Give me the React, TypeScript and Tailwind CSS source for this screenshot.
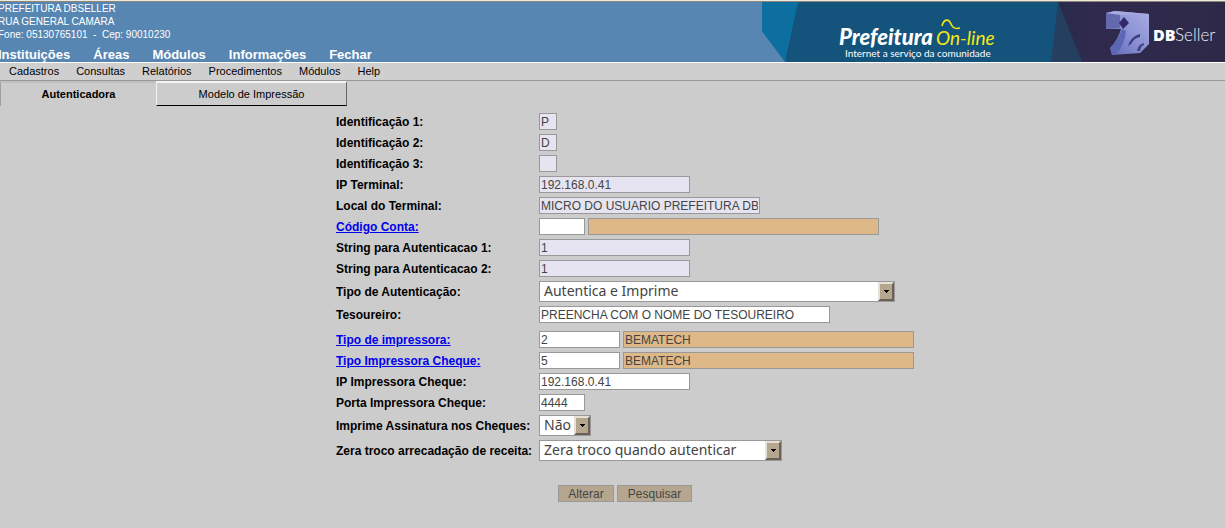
import { useState } from "react";
import type { ReactNode } from "react";

const fieldBase =
  "box-border h-[17px] border border-[#999999] px-px text-xs leading-[15px] text-[#444444] outline-none rounded-none";

type Tone = "edit" | "locked" | "lookup";

const tones: Record<Tone, string> = {
  edit: "bg-white",
  locked: "bg-[#e6e4f1]",
  lookup: "bg-[#deb887]",
};

function Field({ id, value, tone = "edit", width, label }: {
  id: string; value: string; tone?: Tone; width: string; label?: string;
}) {
  return (
    <input
      id={id}
      type="text"
      aria-label={label}
      defaultValue={value}
      readOnly={tone !== "edit"}
      className={`${fieldBase} ${tones[tone]} ${width}`}
    />
  );
}

function Choice({ id, options, width }: { id: string; options: string[]; width: string }) {
  return (
    <div className={`grid h-[21px] border border-[#999999] bg-white ${width}`}>
      <select
        id={id}
        className="col-start-1 row-start-1 h-[19px] w-full appearance-none bg-transparent pb-0.5 pl-1 font-['Noto_Sans',sans-serif] text-sm leading-[17px] text-[#444444] outline-none"
      >
        {options.map((o) => (
          <option key={o}>{o}</option>
        ))}
      </select>
      <span className="pointer-events-none col-start-1 row-start-1 flex h-[19px] w-4 items-center justify-center justify-self-end border-2 border-t-[#e6e0d6] border-r-[#6b6152] border-b-[#6b6152] border-l-[#e6e0d6] bg-[#b5a78f]">
        <svg width="5" height="3" viewBox="0 0 5 3" shapeRendering="crispEdges" aria-hidden="true">
          <path d="M0 0h5v1h-1v1h-1v1h-1v-1h-1v-1h-1z" fill="#000" />
        </svg>
      </span>
    </div>
  );
}

function Row({ id, label, link = false, children, className = "" }: {
  id: string; label: string; link?: boolean; children: ReactNode; className?: string;
}) {
  return (
    <div className={`grid grid-cols-[200px_auto] items-center gap-x-[3px] ${className}`}>
      <label htmlFor={id} className="pt-px text-xs leading-4 font-bold whitespace-nowrap">
        {link ? <a href="#" className="text-[#0000ee] underline">{label}</a> : label}
      </label>
      <div className="flex items-center gap-[3px]">{children}</div>
    </div>
  );
}

function Banner() {
  return (
    <svg className="h-[60px] w-[463px] shrink-0" viewBox="0 0 463 60" role="img" aria-label="Prefeitura On-line DBSeller">
      <defs>
        <linearGradient id="navy" x1="0" x2="1" y1="0" y2="0">
          <stop offset="0" stopColor="#292b4b" />
          <stop offset="0.2" stopColor="#302a4e" />
          <stop offset="1" stopColor="#2d2947" />
        </linearGradient>
        <linearGradient id="cube" x1="0" x2="1" y1="1" y2="0">
          <stop offset="0" stopColor="#5a66b4" />
          <stop offset="0.5" stopColor="#8a90d3" />
          <stop offset="1" stopColor="#a9ade4" />
        </linearGradient>
      </defs>
      <path d="M0 0H463V60H24L0 29Z" fill="#14537b" />
      <path d="M0 0H36L23 60L0 29Z" fill="#0c6f9f" />
      <path d="M296 0L320 60H289Z" fill="#253f60" />
      <path d="M296 0H463V60H320Z" fill="url(#navy)" />
      <text x="77" y="43" fill="#fff" fontFamily="Lato, sans-serif" fontSize="22" fontStyle="italic" fontWeight="900">Prefeitura</text>
      <text x="174" y="43" fill="#f5ea16" fontFamily="Lato, sans-serif" fontSize="19" fontStyle="italic">On-line</text>
      <path d="M180 24C182 16 187 17 189 22S194 27 198 26" fill="none" stroke="#f5e51b" strokeWidth="1.6" />
      <text x="83" y="55" fill="#fff" fontFamily="Lato, sans-serif" fontSize="10">Internet a serviço da comunidade</text>
      <path d="M344 11L353 9L387 12V42L378 51L350 53L348 46Q356 38 359 27L344 27Z" fill="url(#cube)" />
      <path d="M344 11L358 12V26L344 27Z" fill="#6469ae" />
      <path d="M344 11L353 9L387 12L358 13Z" fill="#a5a9e0" />
      <path d="M348 46Q357 37 360 27L364 29Q363 42 354 52L350 53Z" fill="#5d66b4" />
      <path d="M362 15L367 21L361 27L357 21Z" fill="#302a69" />
      <path d="M378 32Q369 34 366 44L369 42Q372 36 378 35Z" fill="#3d3e82" />
      <path d="M382 41Q376 42 375 49L378 49Q379 44 382 43Z" fill="#444687" />
      <text x="391" y="39" fill="#fff" fontFamily="Open Sans, sans-serif" fontSize="16" fontWeight="800">DB</text>
      <text x="413" y="39" fill="#eeedf4" fontFamily="Lato, sans-serif" fontSize="17" fontWeight="300">Seller</text>
    </svg>
  );
}

export default function App() {
  const [tab, setTab] = useState(0);
  const active = "border-t-2 border-l border-t-[#c0c0c0] border-l-[#a0a0a0] border-r-0 border-b-0 pb-0.5 font-bold";
  const idle = "border border-t-2 border-t-[#f3f3f3] border-l-[#f3f3f3] border-r-[#666666] border-b-black";
  return (
    <div className="min-h-screen overflow-x-hidden bg-[#cccccc] font-['Liberation_Sans',Arial,sans-serif] text-black">
      <header className="flex justify-between border-t border-[#ece9e0] bg-[#5786b2]">
        <div className="-ml-0.5 flex min-w-0 flex-1 flex-col justify-between border-t border-[#8f8678] text-white">
          <address className="text-[10px] leading-[13px] whitespace-pre not-italic">
            {"PREFEITURA DBSELLER\nRUA GENERAL CAMARA\nFone: 05130765101  -  Cep: 90010230"}
          </address>
          <nav className="flex gap-[23px] text-[13px] leading-[15px] font-bold">
            {["Instituições", "Áreas", "Módulos", "Informações", "Fechar"].map((t) => (
              <a key={t} href="#">{t}</a>
            ))}
          </nav>
        </div>
        <div className="flex border-t border-[#8f8678]"><Banner /></div>
      </header>
      <nav className="flex h-[19px] gap-[17px] border-t border-b border-t-white border-b-[#999999] bg-[#d0cfd0] pl-[9px] text-[11px] leading-[17px]">
        {["Cadastros", "Consultas", "Relatórios", "Procedimentos", "Módulos", "Help"].map((t) => (
          <a key={t} href="#">{t}</a>
        ))}
      </nav>
      <div className="flex items-start" role="tablist">
        {["Autenticadora", "Modelo de Impressão"].map((t, i) => (
          <button
            key={t}
            type="button"
            role="tab"
            aria-selected={tab === i}
            onClick={() => setTab(i)}
            className={`h-[25px] text-[11px] leading-5 ${i === 0 ? "w-[156px]" : "w-[191px]"} ${tab === i ? active : idle}`}
          >
            {t}
          </button>
        ))}
      </div>
      <form className="mx-auto mt-[7px] w-fit pb-6 pl-[25px]" onSubmit={(e) => e.preventDefault()}>
        <div className="flex flex-col gap-1">
          <Row id="id1" label="Identificação 1:"><Field id="id1" value="P" tone="locked" width="w-[18px]" /></Row>
          <Row id="id2" label="Identificação 2:"><Field id="id2" value="D" tone="locked" width="w-[18px]" /></Row>
          <Row id="id3" label="Identificação 3:"><Field id="id3" value="" tone="locked" width="w-[18px]" /></Row>
          <Row id="ip" label="IP Terminal:"><Field id="ip" value="192.168.0.41" tone="locked" width="w-[151px]" /></Row>
          <Row id="local" label="Local do Terminal:"><Field id="local" value="MICRO DO USUARIO PREFEITURA DB" tone="locked" width="w-[221px]" /></Row>
          <Row id="conta" label="Código Conta:" link>
            <Field id="conta" value="" width="w-[46px]" />
            <Field id="contaDescr" label="Descrição da conta" value="" tone="lookup" width="w-[291px]" />
          </Row>
          <Row id="s1" label="String para Autenticacao 1:"><Field id="s1" value="1" tone="locked" width="w-[151px]" /></Row>
          <Row id="s2" label="String para Autenticacao 2:"><Field id="s2" value="1" tone="locked" width="w-[151px]" /></Row>
          <Row id="tipo" label="Tipo de Autenticação:"><Choice id="tipo" options={["Autentica e Imprime"]} width="w-[356px]" /></Row>
          <Row id="tes" label="Tesoureiro:"><Field id="tes" value="PREENCHA COM O NOME DO TESOUREIRO" width="w-[291px]" /></Row>
          <Row id="imp" label="Tipo de impressora:" link className="mt-1">
            <Field id="imp" value="2" width="w-[81px]" />
            <Field id="impDescr" label="Descrição da impressora" value="BEMATECH" tone="lookup" width="w-[291px]" />
          </Row>
          <Row id="chq" label="Tipo Impressora Cheque:" link>
            <Field id="chq" value="5" width="w-[81px]" />
            <Field id="chqDescr" label="Descrição da impressora de cheque" value="BEMATECH" tone="lookup" width="w-[291px]" />
          </Row>
          <Row id="ipchq" label="IP Impressora Cheque:"><Field id="ipchq" value="192.168.0.41" width="w-[151px]" /></Row>
          <Row id="porta" label="Porta Impressora Cheque:"><Field id="porta" value="4444" width="w-[46px]" /></Row>
          <Row id="ass" label="Imprime Assinatura nos Cheques:"><Choice id="ass" options={["Não", "Sim"]} width="w-[52px]" /></Row>
          <Row id="zera" label="Zera troco arrecadação de receita:"><Choice id="zera" options={["Zera troco quando autenticar"]} width="w-[243px]" /></Row>
        </div>
        <div className="mt-6 flex justify-center gap-[3px] text-xs text-[#444444]">
          <button type="button" className="h-[17px] w-14 border border-[#999999] bg-[#b5a78f] leading-[17px]">Alterar</button>
          <button type="button" className="h-[17px] w-[75px] border border-[#999999] bg-[#b5a78f] leading-[17px]">Pesquisar</button>
        </div>
      </form>
    </div>
  );
}
